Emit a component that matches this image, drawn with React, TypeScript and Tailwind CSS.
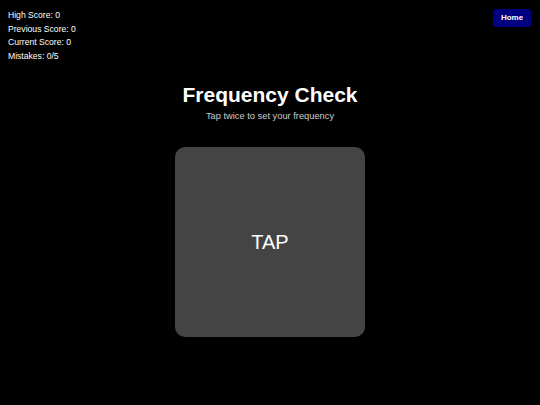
export default function App() {
  const stats = [
    ["High Score", "0"],
    ["Previous Score", "0"],
    ["Current Score", "0"],
    ["Mistakes", "0/5"],
  ];

  return (
    <div className="min-h-[405px] w-full bg-black text-white font-['Liberation_Sans',Arial,sans-serif]">
      {/* top bar */}
      <div className="flex items-start justify-between pl-[8px] pr-[9px] pt-[9px]">
        <div className="text-[8.6px] leading-[13.7px]">
          {stats.map(([label, value]) => (
            <div key={label}>
              {label}: {value}
            </div>
          ))}
        </div>
        <button className="h-[18px] w-[38px] rounded-[3px] bg-[#000080] text-[8px] font-bold text-white">
          Home
        </button>
      </div>

      {/* main */}
      <div className="flex flex-col items-center">
        <h1 className="mt-[19px] text-[21px] font-bold leading-[24px]">Frequency Check</h1>
        <p className="mt-[3px] text-[9.3px] leading-[12px] text-[#cccccc]">Tap twice to set your frequency</p>
        <div className="mt-[25px] flex h-[190px] w-[190px] cursor-pointer select-none items-center justify-center rounded-[10px] bg-[#444444]">
          <span className="text-[20px]">TAP</span>
        </div>
      </div>
    </div>
  );
}
